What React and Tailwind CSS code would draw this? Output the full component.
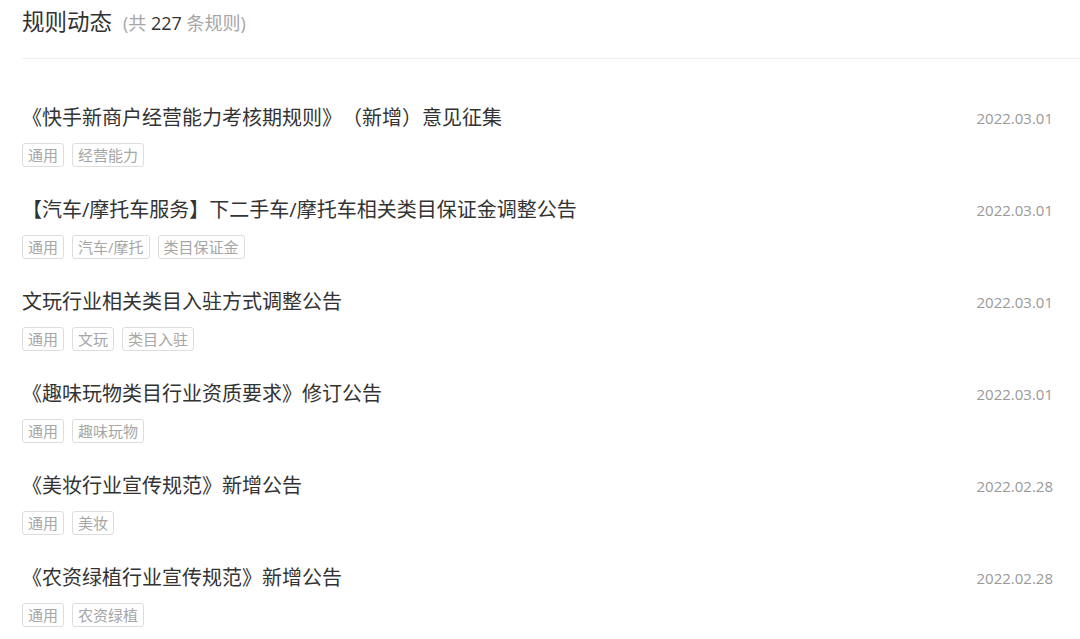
const RULES = [
  { title: '《快手新商户经营能力考核期规则》（新增）意见征集', date: '2022.03.01', tags: ['通用', '经营能力'] },
  { title: '【汽车/摩托车服务】下二手车/摩托车相关类目保证金调整公告', date: '2022.03.01', tags: ['通用', '汽车/摩托', '类目保证金'] },
  { title: '文玩行业相关类目入驻方式调整公告', date: '2022.03.01', tags: ['通用', '文玩', '类目入驻'] },
  { title: '《趣味玩物类目行业资质要求》修订公告', date: '2022.03.01', tags: ['通用', '趣味玩物'] },
  { title: '《美妆行业宣传规范》新增公告', date: '2022.02.28', tags: ['通用', '美妆'] },
  { title: '《农资绿植行业宣传规范》新增公告', date: '2022.02.28', tags: ['通用', '农资绿植'] },
];

const font = { fontFamily: '"Open Sans", "Noto Sans CJK SC", sans-serif' };

function Tag({ children }) {
  return (
    <span className="h-[24px] px-[5px] border border-[#dddddd] rounded-[3px] text-[15px] leading-[22px] text-[#a6a6a6]">
      {children}
    </span>
  );
}

function RuleItem({ rule }) {
  return (
    <div className="pb-[29px] pr-[27px]">
      <div className="flex items-center justify-between h-[28px]">
        <span className="text-[20px] leading-[28px] text-[#333333]">{rule.title}</span>
        <span className="text-[15px] text-[#999999]">{rule.date}</span>
      </div>
      <div className="flex gap-[8px] mt-[11px]">
        {rule.tags.map((t) => (
          <Tag key={t}>{t}</Tag>
        ))}
      </div>
    </div>
  );
}

export default function App() {
  return (
    <div className="w-[1080px] h-[639px] bg-white overflow-hidden pl-[22px] [text-spacing-trim:space-all]" style={font}>
      <div className="h-[59px] border-b border-[#f0f0f0] pt-[7px]">
        <div className="flex items-baseline">
          <h1 className="text-[22.5px] leading-[30px] text-[#333333] font-normal">规则动态</h1>
          <span className="ml-[11px] text-[18px] text-[#a6a6a6]">
            (共 <span className="text-[#333333]">227</span> 条规则)
          </span>
        </div>
      </div>
      <div className="pt-[45px]">
        {RULES.map((r) => (
          <RuleItem key={r.title} rule={r} />
        ))}
      </div>
    </div>
  );
}
